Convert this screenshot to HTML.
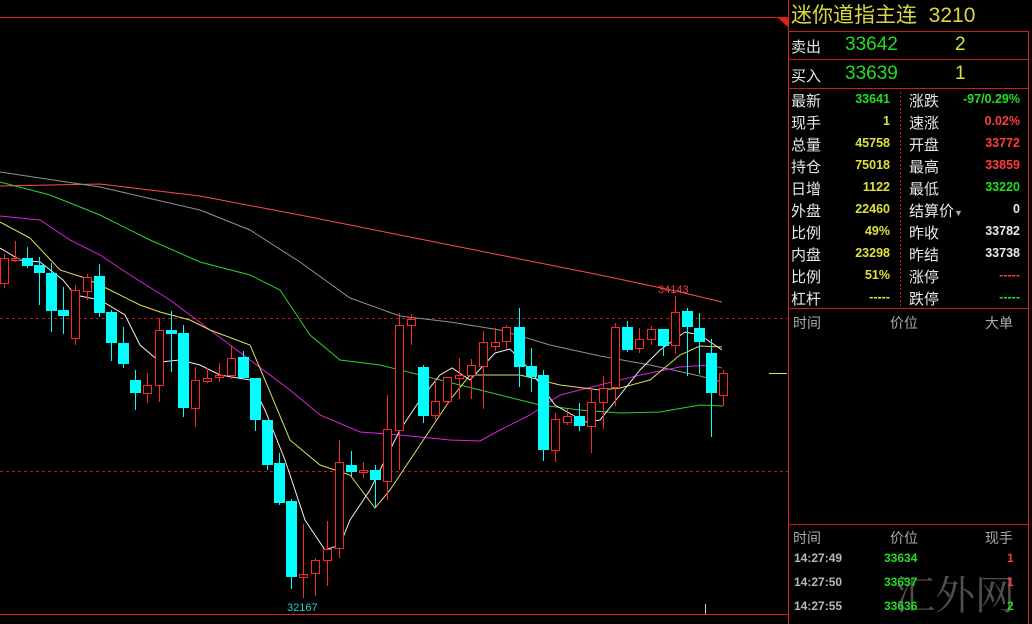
<!DOCTYPE html>
<html><head><meta charset="utf-8"><style>
body{margin:0;background:#000;width:1032px;height:624px;overflow:hidden;position:relative;font-family:"Liberation Sans","Noto Sans CJK SC",sans-serif}
.t{position:absolute;white-space:nowrap}
.l{color:#e8e8e8;font-size:15px}
.n{font-weight:bold;font-size:12.5px;text-align:right;width:80px}
.y{color:#e0e040}.g{color:#22dd22}.r{color:#ff3c3c}.w{color:#e8e8e8}
.h{position:absolute;background:#c81e1e;height:1px}
#c line,#c rect{shape-rendering:crispEdges}
#c line[stroke="#f33"],#c rect[stroke="#f33"]{stroke:#ff2828}
</style></head><body>
<svg width="1032" height="624" style="position:absolute;left:0;top:0">
<line x1="0" y1="17.5" x2="788" y2="17.5" stroke="#d82020"/>
<polygon points="778,18 788,18 788,27" fill="#e02020"/>
<line x1="0" y1="614.5" x2="788" y2="614.5" stroke="#d82020"/>
<line x1="788.5" y1="0" x2="788.5" y2="624" stroke="#d82020"/>
<line x1="1028.5" y1="31" x2="1028.5" y2="624" stroke="#d82020"/>
<line x1="0" y1="318.5" x2="788" y2="318.5" stroke="#b02020" stroke-dasharray="3,3"/>
<line x1="0" y1="471.5" x2="788" y2="471.5" stroke="#b02020" stroke-dasharray="3,3"/>
<line x1="900.5" y1="92" x2="900.5" y2="306" stroke="#c82020" stroke-dasharray="2,2"/>
<line x1="769" y1="373.5" x2="787" y2="373.5" stroke="#e0e040"/>
<line x1="705.5" y1="604" x2="705.5" y2="614" stroke="#ccc"/>
<g fill="none" stroke-width="1">
<polyline stroke="#ff4c4c" points="0,186 100,184 200,196 300,215 400,235 500,255 600,275 680,292 722,302"/>
<polyline stroke="#909090" points="0,172 100,187 200,210 250,230 300,262 350,298 400,316 450,322 500,330 550,345 600,356 650,365 700,376 722,382"/>
<polyline stroke="#30d030" points="0,182 50,195 100,215 150,240 200,262 250,275 280,290 310,335 340,360 380,365 420,375 460,385 500,395 540,405 580,410 620,413 660,412 700,405 723,406"/>
<polyline stroke="#e020e0" points="0,216 40,220 70,240 100,255 130,275 170,300 210,330 250,360 290,390 320,415 360,432 400,435 450,440 480,441 500,430 530,415 560,395 600,385 640,375 680,367 710,365 722,368"/>
<polyline stroke="#e0e060" points="0,222 30,238 60,270 85,278 110,290 140,305 160,312 190,320 210,330 250,345 265,380 290,440 320,465 350,475 375,508 390,490 420,445 450,400 470,375 520,375 560,385 600,390 620,388 650,380 680,355 700,346 722,347"/>
<polyline stroke="#f0f0f0" points="0,248 20,260 40,262 63,280 75,295 100,300 125,315 140,345 160,362 180,360 200,365 220,375 250,380 265,410 285,460 305,520 325,550 340,545 350,520 370,490 385,460 400,430 420,400 440,375 452,368 470,380 495,353 510,349 530,370 555,405 585,422 600,420 620,395 640,370 660,350 685,332 700,335 722,350"/>
</g>
<g id="c" stroke-width="1">
<line x1="4.5" y1="254" x2="4.5" y2="288" stroke="#f33"/><rect x="0.5" y="258.5" width="8" height="25" fill="#000" stroke="#f33"/>
<line x1="15.5" y1="241" x2="15.5" y2="262" stroke="#f33"/><rect x="11.5" y="258.5" width="8" height="2" fill="#000" stroke="#f33"/>
<line x1="27.5" y1="247" x2="27.5" y2="268" stroke="#0ff"/><rect x="22" y="258" width="11" height="8" fill="#0ff"/>
<line x1="39.5" y1="257" x2="39.5" y2="305" stroke="#0ff"/><rect x="34" y="265" width="11" height="8" fill="#0ff"/>
<line x1="51.5" y1="263" x2="51.5" y2="332" stroke="#0ff"/><rect x="46" y="273" width="11" height="38" fill="#0ff"/>
<line x1="63.5" y1="287" x2="63.5" y2="334" stroke="#0ff"/><rect x="58" y="310" width="11" height="6" fill="#0ff"/>
<line x1="75.5" y1="285" x2="75.5" y2="345" stroke="#f33"/><rect x="71.5" y="290.5" width="8" height="48" fill="#000" stroke="#f33"/>
<line x1="87.5" y1="274" x2="87.5" y2="300" stroke="#f33"/><rect x="83.5" y="277.5" width="8" height="14" fill="#000" stroke="#f33"/>
<line x1="99.5" y1="264" x2="99.5" y2="317" stroke="#0ff"/><rect x="94" y="276" width="11" height="37" fill="#0ff"/>
<line x1="111.5" y1="310" x2="111.5" y2="361" stroke="#0ff"/><rect x="106" y="312" width="11" height="31" fill="#0ff"/>
<line x1="123.5" y1="327" x2="123.5" y2="368" stroke="#0ff"/><rect x="118" y="343" width="11" height="21" fill="#0ff"/>
<line x1="135.5" y1="370" x2="135.5" y2="410" stroke="#0ff"/><rect x="130" y="380" width="11" height="13" fill="#0ff"/>
<line x1="147.5" y1="373" x2="147.5" y2="403" stroke="#f33"/><rect x="143.5" y="385.5" width="8" height="8" fill="#000" stroke="#f33"/>
<line x1="159.5" y1="318" x2="159.5" y2="402" stroke="#f33"/><rect x="155.5" y="330.5" width="8" height="55" fill="#000" stroke="#f33"/>
<line x1="171.5" y1="311" x2="171.5" y2="372" stroke="#0ff"/><rect x="166" y="330" width="11" height="4" fill="#0ff"/>
<line x1="183.5" y1="325" x2="183.5" y2="417" stroke="#0ff"/><rect x="178" y="333" width="11" height="75" fill="#0ff"/>
<line x1="195.5" y1="367" x2="195.5" y2="427" stroke="#f33"/><rect x="191.5" y="380.5" width="8" height="28" fill="#000" stroke="#f33"/>
<line x1="207.5" y1="368" x2="207.5" y2="383" stroke="#f33"/><rect x="203.5" y="378.5" width="8" height="3" fill="#000" stroke="#f33"/>
<line x1="219.5" y1="363" x2="219.5" y2="382" stroke="#f33"/><rect x="215.5" y="375.5" width="8" height="2" fill="#000" stroke="#f33"/>
<line x1="231.5" y1="345" x2="231.5" y2="379" stroke="#f33"/><rect x="227.5" y="358.5" width="8" height="17" fill="#000" stroke="#f33"/>
<line x1="243.5" y1="351" x2="243.5" y2="378" stroke="#0ff"/><rect x="238" y="357" width="11" height="21" fill="#0ff"/>
<line x1="255.5" y1="378" x2="255.5" y2="431" stroke="#0ff"/><rect x="250" y="378" width="11" height="42" fill="#0ff"/>
<line x1="267.5" y1="420" x2="267.5" y2="470" stroke="#0ff"/><rect x="262" y="420" width="11" height="45" fill="#0ff"/>
<line x1="279.5" y1="453" x2="279.5" y2="505" stroke="#0ff"/><rect x="274" y="463" width="11" height="40" fill="#0ff"/>
<line x1="291.5" y1="499" x2="291.5" y2="589" stroke="#0ff"/><rect x="286" y="501" width="11" height="76" fill="#0ff"/>
<line x1="303.5" y1="524" x2="303.5" y2="598" stroke="#f33"/><rect x="299.5" y="574.5" width="8" height="3" fill="#000" stroke="#f33"/>
<line x1="315.5" y1="558" x2="315.5" y2="596" stroke="#f33"/><rect x="311.5" y="560.5" width="8" height="13" fill="#000" stroke="#f33"/>
<line x1="327.5" y1="521" x2="327.5" y2="586" stroke="#f33"/><rect x="323.5" y="549.5" width="8" height="11" fill="#000" stroke="#f33"/>
<line x1="339.5" y1="440" x2="339.5" y2="558" stroke="#f33"/><rect x="335.5" y="462.5" width="8" height="86" fill="#000" stroke="#f33"/>
<line x1="351.5" y1="451" x2="351.5" y2="476" stroke="#0ff"/><rect x="346" y="465" width="11" height="7" fill="#0ff"/>
<line x1="363.5" y1="462" x2="363.5" y2="478" stroke="#f33"/><rect x="359.5" y="470.5" width="8" height="2" fill="#000" stroke="#f33"/>
<line x1="375.5" y1="465" x2="375.5" y2="508" stroke="#0ff"/><rect x="370" y="470" width="11" height="10" fill="#0ff"/>
<line x1="387.5" y1="395" x2="387.5" y2="500" stroke="#f33"/><rect x="383.5" y="429.5" width="8" height="52" fill="#000" stroke="#f33"/>
<line x1="399.5" y1="313" x2="399.5" y2="470" stroke="#f33"/><rect x="395.5" y="325.5" width="8" height="105" fill="#000" stroke="#f33"/>
<line x1="411.5" y1="314" x2="411.5" y2="345" stroke="#f33"/><rect x="407.5" y="319.5" width="8" height="6" fill="#000" stroke="#f33"/>
<line x1="423.5" y1="365" x2="423.5" y2="423" stroke="#0ff"/><rect x="418" y="367" width="11" height="49" fill="#0ff"/>
<line x1="435.5" y1="379" x2="435.5" y2="420" stroke="#f33"/><rect x="431.5" y="401.5" width="8" height="14" fill="#000" stroke="#f33"/>
<line x1="447.5" y1="377" x2="447.5" y2="404" stroke="#f33"/><rect x="443.5" y="377.5" width="8" height="24" fill="#000" stroke="#f33"/>
<line x1="459.5" y1="358" x2="459.5" y2="399" stroke="#f33"/><rect x="455.5" y="375.5" width="8" height="3" fill="#000" stroke="#f33"/>
<line x1="471.5" y1="359" x2="471.5" y2="399" stroke="#f33"/><rect x="467.5" y="365.5" width="8" height="10" fill="#000" stroke="#f33"/>
<line x1="483.5" y1="331" x2="483.5" y2="409" stroke="#f33"/><rect x="479.5" y="342.5" width="8" height="24" fill="#000" stroke="#f33"/>
<line x1="495.5" y1="328" x2="495.5" y2="351" stroke="#f33"/><rect x="491.5" y="342.5" width="8" height="4" fill="#000" stroke="#f33"/>
<line x1="506.5" y1="325" x2="506.5" y2="349" stroke="#f33"/><rect x="502.5" y="327.5" width="8" height="14" fill="#000" stroke="#f33"/>
<line x1="519.5" y1="308" x2="519.5" y2="387" stroke="#0ff"/><rect x="514" y="327" width="11" height="40" fill="#0ff"/>
<line x1="531.5" y1="348" x2="531.5" y2="392" stroke="#0ff"/><rect x="526" y="366" width="11" height="11" fill="#0ff"/>
<line x1="543.5" y1="370" x2="543.5" y2="461" stroke="#0ff"/><rect x="538" y="375" width="11" height="75" fill="#0ff"/>
<line x1="555.5" y1="413" x2="555.5" y2="462" stroke="#f33"/><rect x="551.5" y="419.5" width="8" height="31" fill="#000" stroke="#f33"/>
<line x1="567.5" y1="409" x2="567.5" y2="425" stroke="#f33"/><rect x="563.5" y="416.5" width="8" height="6" fill="#000" stroke="#f33"/>
<line x1="579.5" y1="403" x2="579.5" y2="431" stroke="#0ff"/><rect x="574" y="416" width="11" height="10" fill="#0ff"/>
<line x1="591.5" y1="388" x2="591.5" y2="453" stroke="#f33"/><rect x="587.5" y="402.5" width="8" height="24" fill="#000" stroke="#f33"/>
<line x1="603.5" y1="376" x2="603.5" y2="429" stroke="#f33"/><rect x="599.5" y="388.5" width="8" height="14" fill="#000" stroke="#f33"/>
<line x1="615.5" y1="323" x2="615.5" y2="406" stroke="#f33"/><rect x="611.5" y="327.5" width="8" height="60" fill="#000" stroke="#f33"/>
<line x1="627.5" y1="321" x2="627.5" y2="352" stroke="#0ff"/><rect x="622" y="327" width="11" height="23" fill="#0ff"/>
<line x1="639.5" y1="328" x2="639.5" y2="353" stroke="#f33"/><rect x="635.5" y="339.5" width="8" height="9" fill="#000" stroke="#f33"/>
<line x1="651.5" y1="326" x2="651.5" y2="345" stroke="#f33"/><rect x="647.5" y="329.5" width="8" height="10" fill="#000" stroke="#f33"/>
<line x1="663.5" y1="329" x2="663.5" y2="356" stroke="#0ff"/><rect x="658" y="329" width="11" height="17" fill="#0ff"/>
<line x1="675.5" y1="296" x2="675.5" y2="354" stroke="#f33"/><rect x="671.5" y="312.5" width="8" height="33" fill="#000" stroke="#f33"/>
<line x1="687.5" y1="308" x2="687.5" y2="376" stroke="#0ff"/><rect x="682" y="311" width="11" height="16" fill="#0ff"/>
<line x1="699.5" y1="313" x2="699.5" y2="374" stroke="#0ff"/><rect x="694" y="328" width="11" height="14" fill="#0ff"/>
<line x1="711.5" y1="339" x2="711.5" y2="437" stroke="#0ff"/><rect x="706" y="353" width="11" height="40" fill="#0ff"/>
<line x1="723.5" y1="370" x2="723.5" y2="406" stroke="#f33"/><rect x="719.5" y="373.5" width="8" height="22" fill="#000" stroke="#f33"/>
</g>
<text x="658" y="293" fill="#e84040" font-size="11" font-family="Liberation Sans,sans-serif">34143</text>
<text x="287" y="611" fill="#20d0d0" font-size="11" font-family="Liberation Sans,sans-serif">32167</text>
<text x="895" y="609" fill="#6a6a6a" font-size="40" font-family="Noto Serif CJK SC,serif" opacity="0.75">汇外网</text>
</svg>
<div class="h" style="left:788px;top:31px;width:241px"></div>
<div class="h" style="left:788px;top:59px;width:241px"></div>
<div class="h" style="left:788px;top:88px;width:241px"></div>
<div class="h" style="left:788px;top:308px;width:241px"></div>
<div class="h" style="left:788px;top:524px;width:241px"></div>
<div class="t y" style="left:791px;top:3px;font-size:21px;line-height:26px;color:#d8d840">迷你道指主连&nbsp;&nbsp;3210</div>
<div class="t l" style="left:791px;top:36px">卖出</div>
<div class="t g" style="left:845px;top:34px;font-size:19px">33642</div>
<div class="t y" style="left:955px;top:34px;font-size:19px">2</div>
<div class="t l" style="left:791px;top:65px">买入</div>
<div class="t g" style="left:845px;top:63px;font-size:19px">33639</div>
<div class="t y" style="left:955px;top:63px;font-size:19px">1</div>

<div class="t l" style="left:791px;top:90px">最新</div><div class="t n g" style="left:810px;top:92px">33641</div>
<div class="t l" style="left:909px;top:90px">涨跌</div><div class="t n g" style="left:940px;top:92px">-97/0.29%</div>
<div class="t l" style="left:791px;top:112px">现手</div><div class="t n y" style="left:810px;top:114px">1</div>
<div class="t l" style="left:909px;top:112px">速涨</div><div class="t n r" style="left:940px;top:114px">0.02%</div>
<div class="t l" style="left:791px;top:134px">总量</div><div class="t n y" style="left:810px;top:136px">45758</div>
<div class="t l" style="left:909px;top:134px">开盘</div><div class="t n r" style="left:940px;top:136px">33772</div>
<div class="t l" style="left:791px;top:156px">持仓</div><div class="t n y" style="left:810px;top:158px">75018</div>
<div class="t l" style="left:909px;top:156px">最高</div><div class="t n r" style="left:940px;top:158px">33859</div>
<div class="t l" style="left:791px;top:178px">日增</div><div class="t n y" style="left:810px;top:180px">1122</div>
<div class="t l" style="left:909px;top:178px">最低</div><div class="t n g" style="left:940px;top:180px">33220</div>
<div class="t l" style="left:791px;top:200px">外盘</div><div class="t n y" style="left:810px;top:202px">22460</div>
<div class="t l" style="left:909px;top:200px">结算价<span style="font-size:9px;color:#aaa">▼</span></div><div class="t n w" style="left:940px;top:202px">0</div>
<div class="t l" style="left:791px;top:222px">比例</div><div class="t n y" style="left:810px;top:224px">49%</div>
<div class="t l" style="left:909px;top:222px">昨收</div><div class="t n w" style="left:940px;top:224px">33782</div>
<div class="t l" style="left:791px;top:244px">内盘</div><div class="t n y" style="left:810px;top:246px">23298</div>
<div class="t l" style="left:909px;top:244px">昨结</div><div class="t n w" style="left:940px;top:246px">33738</div>
<div class="t l" style="left:791px;top:266px">比例</div><div class="t n y" style="left:810px;top:268px">51%</div>
<div class="t l" style="left:909px;top:266px">涨停</div><div class="t n r" style="left:940px;top:268px">-----</div>
<div class="t l" style="left:791px;top:288px">杠杆</div><div class="t n y" style="left:810px;top:290px">-----</div>
<div class="t l" style="left:909px;top:288px">跌停</div><div class="t n g" style="left:940px;top:290px">-----</div>

<div class="t" style="left:793px;top:313px;color:#aaa;font-size:14px">时间</div>
<div class="t" style="left:890px;top:313px;color:#aaa;font-size:14px">价位</div>
<div class="t" style="left:985px;top:313px;color:#aaa;font-size:14px">大单</div>
<div class="t" style="left:793px;top:528px;color:#aaa;font-size:14px">时间</div>
<div class="t" style="left:890px;top:528px;color:#aaa;font-size:14px">价位</div>
<div class="t" style="left:985px;top:528px;color:#aaa;font-size:14px">现手</div>
<div class="t" style="left:794px;top:551px;color:#b8b8b8;font-size:12px;font-weight:bold">14:27:49</div>
<div class="t g" style="left:884px;top:551px;font-size:12px;font-weight:bold">33634</div>
<div class="t r" style="left:1007px;top:551px;font-size:12px;font-weight:bold">1</div>
<div class="t" style="left:794px;top:575px;color:#b8b8b8;font-size:12px;font-weight:bold">14:27:50</div>
<div class="t g" style="left:884px;top:575px;font-size:12px;font-weight:bold">33637</div>
<div class="t r" style="left:1007px;top:575px;font-size:12px;font-weight:bold">1</div>
<div class="t" style="left:794px;top:599px;color:#b8b8b8;font-size:12px;font-weight:bold">14:27:55</div>
<div class="t g" style="left:884px;top:599px;font-size:12px;font-weight:bold">33636</div>
<div class="t g" style="left:1007px;top:599px;font-size:12px;font-weight:bold">2</div>
</body></html>
